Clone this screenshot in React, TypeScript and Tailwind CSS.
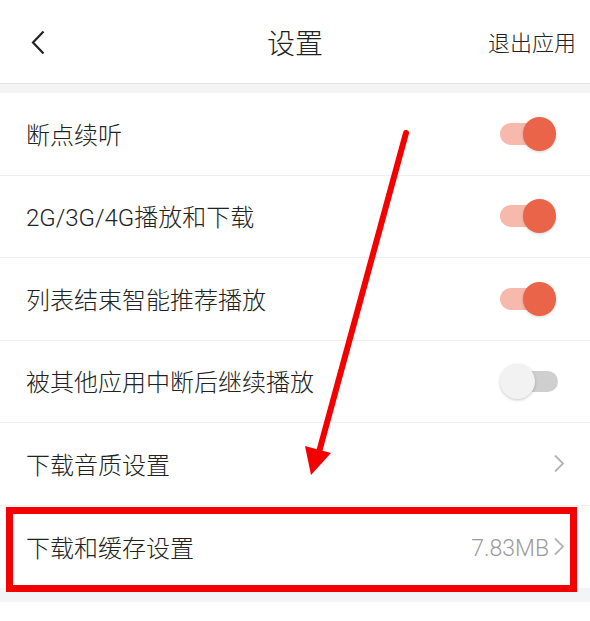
import React from 'react';

const FONT = 'Roboto, "Noto Sans CJK SC", "Noto Sans", sans-serif';

type Row = {
  label: string;
  kind: 'on' | 'off' | 'link';
  value?: string;
};

const rows: Row[] = [
  { label: '断点续听', kind: 'on' },
  { label: '2G/3G/4G播放和下载', kind: 'on' },
  { label: '列表结束智能推荐播放', kind: 'on' },
  { label: '被其他应用中断后继续播放', kind: 'off' },
  { label: '下载音质设置', kind: 'link' },
  { label: '下载和缓存设置', kind: 'link', value: '7.83MB' },
];

const Toggle = ({ on }: { on: boolean }) => (
  <div className="relative w-[58px] h-[34px] shrink-0 mr-[7px]">
    {on ? (
      <>
        <div className="absolute left-0 right-[5px] top-[6px] h-[22px] rounded-full bg-[#f7b9ab]" />
        <div className="absolute right-[2px] top-0 w-[33px] h-[34px] rounded-full bg-[#ea644a] shadow-[0_1px_3px_rgba(0,0,0,0.18)]" />
      </>
    ) : (
      <>
        <div className="absolute left-[4px] right-0 top-[7px] h-[21px] rounded-full bg-[#cfcfcf]" />
        <div className="absolute left-0 top-0 w-[35px] h-[35px] rounded-full bg-[#f2f2f2] shadow-[0_1px_3px_rgba(0,0,0,0.22)]" />
      </>
    )}
  </div>
);

const Chevron = () => (
  <svg width="12" height="19" viewBox="0 0 12 19" className="shrink-0">
    <path d="M2 1.5 L10 9.5 L2 17.5" fill="none" stroke="#b4b4b4" strokeWidth="1.8" />
  </svg>
);

const App: React.FC = () => {
  return (
    <div className="relative w-[590px] h-[621px] bg-white overflow-hidden font-light" style={{ fontFamily: FONT }}>
      {/* Header */}
      <div className="h-[84px] flex items-center justify-between pl-[31px] pr-[14px] border-b border-[#e3e3e3] bg-white">
        <svg width="14" height="25" viewBox="0 0 14 25" className="mt-[2px]">
          <path d="M12.5 1.5 L2 12.5 L12.5 23.5" fill="none" stroke="#222" strokeWidth="2.2" />
        </svg>
        <div className="absolute left-0 right-0 top-0 h-[84px] flex items-center justify-center pointer-events-none">
          <span className="text-[28px] text-[#222] leading-none pt-[5px]">设置</span>
        </div>
        <span className="text-[22px] text-[#222] leading-none pt-[5px]">退出应用</span>
      </div>

      <div className="h-[9px] bg-[#f4f4f4]" />

      {/* Rows */}
      <div className="bg-white">
        {rows.map((r, i) => (
          <div
            key={i}
            className={`relative h-[82.5px] flex items-center justify-between pl-[26px] pr-[25px] ${
              i < rows.length - 1 ? 'border-b border-[#efefef]' : ''
            }`}
          >
            <span className="text-[24px] text-[#222] leading-none pt-[4px]">{r.label}</span>
            {r.kind === 'on' && <Toggle on />}
            {r.kind === 'off' && <Toggle on={false} />}
            {r.kind === 'link' && (
              <div className="flex items-center gap-[4px]">
                {r.value && <span className="text-[23px] text-[#9b9b9b] leading-none pt-[3px]">{r.value}</span>}
                <Chevron />
              </div>
            )}
            {i === rows.length - 1 && (
              <div className="absolute left-[6px] right-[13px] top-[1px] bottom-[-4px] border-[7px] border-[#f40000] pointer-events-none" />
            )}
          </div>
        ))}
      </div>

      <div className="h-[14px] bg-[#f3f4f6]" />

      {/* Annotation arrow */}
      <svg className="absolute left-0 top-0 pointer-events-none" width="590" height="621" viewBox="0 0 590 621">
        <line x1="406" y1="133" x2="319" y2="452" stroke="#f40000" strokeWidth="6" strokeLinecap="round" />
        <polygon points="305,446 331,453 311,475" fill="#f40000" />
      </svg>
    </div>
  );
};

export default App;
